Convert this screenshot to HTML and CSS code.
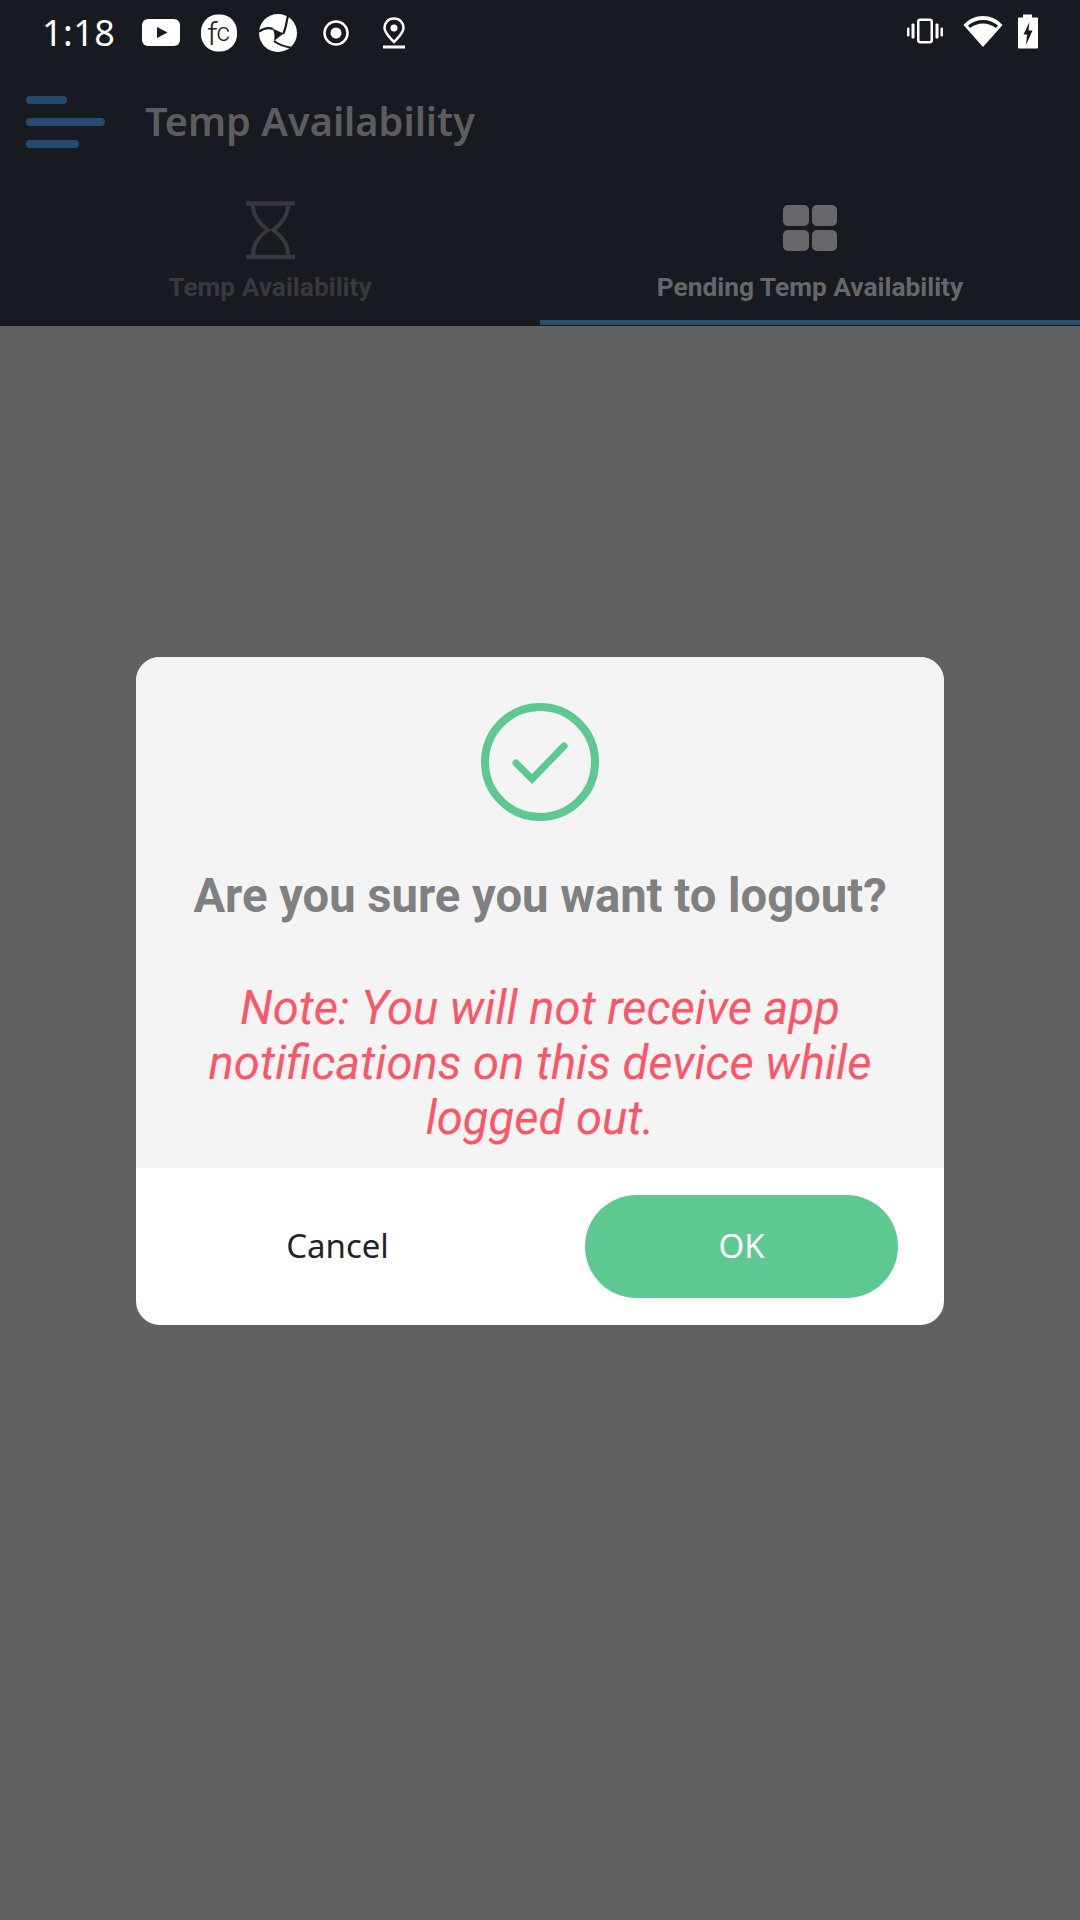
FILE: index.html
```html
<!DOCTYPE html>
<html lang="en">
<head>
    <meta charset="UTF-8">
    <meta name="viewport" content="width=device-width, initial-scale=1.0">
    <title>Temp Availability</title>
    <link rel="stylesheet" href="styles.css">
</head>
<body>
    <div class="status-bar">
        <span class="time">1:18</span>
        <div class="status-left">
            <svg class="status-icon" viewBox="0 0 38 38">
                <rect x="0" y="5" width="38" height="27" rx="6" fill="#fff"/>
                <path d="M15 13 25.500 18.500 15 24Z" fill="#171a21"/>
            </svg>
            <svg class="status-icon" viewBox="0 0 38 38">
                <rect x="1" y="0.500" width="36" height="37" rx="17" fill="#fff"/>
                <text x="7" y="31" class="fc-f">f</text>
                <text x="16.500" y="27" class="fc-c">c</text>
            </svg>
            <svg class="status-icon" viewBox="0 0 38 38">
                <circle cx="19" cy="19" r="19" fill="#fff"/>
                <path d="M13.500 14.500 24.500 19.500 15 27C16 23 15.500 18 13.500 14.500Z" fill="#171a21"/>
                <path d="M24 20C27 15 27 9 29 2M14 15C9 13 5 14 0 17.500M15 27C20 31 27 33 34 34" fill="none" stroke="#171a21" stroke-width="2.200"/>
            </svg>
            <svg class="status-icon" viewBox="0 0 38 38">
                <circle cx="19" cy="19" r="11.500" fill="none" stroke="#fff" stroke-width="2.500"/>
                <circle cx="19" cy="19" r="5.500" fill="#fff"/>
            </svg>
            <svg class="status-icon" viewBox="0 0 38 38">
                <path d="M18 4.500C12 4.500 8.500 9 8.500 14C8.500 19 14 23.500 18 28C22 23.500 27.500 19 27.500 14C27.500 9 24 4.500 18 4.500Z" fill="none" stroke="#fff" stroke-width="2.500"/>
                <circle cx="18" cy="14" r="3.500" fill="#fff"/>
                <rect x="7" y="31.500" width="22" height="3" fill="#fff"/>
            </svg>
        </div>
        <div class="status-right">
            <svg class="vibrate-icon" viewBox="0 0 48 38">
                <rect x="17.250" y="5.750" width="13.500" height="22.500" rx="2" fill="none" stroke="#fff" stroke-width="2.500"/>
                <rect x="10.500" y="9.500" width="3" height="15" rx="1" fill="#fff"/>
                <rect x="34.500" y="9.500" width="3" height="15" rx="1" fill="#fff"/>
                <rect x="6" y="13.500" width="2.500" height="9" rx="1" fill="#fff"/>
                <rect x="39.500" y="13.500" width="2.500" height="9" rx="1" fill="#fff"/>
            </svg>
            <svg class="wifi-icon" viewBox="0 0 40 36">
                <path d="M0.500 10C11 -2 29 -2 39.500 10L20 32Z" fill="#fff"/>
                <path d="M5 10.500C13 3 27 3 35 10.500L33 13C25 7 15 7 7 13Z" fill="#171a21"/>
            </svg>
            <svg class="battery-icon" viewBox="0 0 24 38">
                <path d="M7 0.500H16V3.500H21C21.600 3.500 22 3.900 22 4.500V33.500C22 34.100 21.600 34.500 21 34.500H3C2.400 34.500 2 34.100 2 33.500V4.500C2 3.900 2.400 3.500 3 3.500H7Z" fill="#fff"/>
                <path d="M13.500 8 7.500 20.500H11L10 31 16.500 16.500H12.500Z" fill="#171a21"/>
            </svg>
        </div>
    </div>

    <header class="app-header">
        <div class="menu-icon">
            <span class="menu-bar bar-short"></span>
            <span class="menu-bar bar-long"></span>
            <span class="menu-bar bar-mid"></span>
        </div>
        <h1 class="page-title">Temp Availability</h1>
    </header>

    <nav class="tabs">
        <div class="tab">
            <svg class="hourglass" viewBox="0 0 49 60">
                <path d="M0 3.500H49M0 57H49" stroke="currentColor" stroke-width="4.500" fill="none"/>
                <path d="M7 6C7 17 14 24 22 30C14 36 7 43 7 55M42 6C42 17 35 24 27 30C35 36 42 43 42 55" stroke="currentColor" stroke-width="4" fill="none"/>
            </svg>
            <span class="tab-label">Temp Availability</span>
        </div>
        <div class="tab tab-active">
            <div class="grid-icon">
                <span></span><span></span><span></span><span></span>
            </div>
            <span class="tab-label">Pending Temp Availability</span>
        </div>
    </nav>

    <main class="scrim">
        <div class="dialog">
            <div class="dialog-body">
                <svg class="check-icon" viewBox="0 0 118 118">
                    <circle cx="59" cy="59" r="55" fill="none" stroke="#5dc991" stroke-width="8"/>
                    <path d="M35 60 51 76 83 43" fill="none" stroke="#5dc991" stroke-width="7" stroke-linecap="round"/>
                </svg>
                <h2 class="dialog-title">Are you sure you want to logout?</h2>
                <p class="dialog-note">Note: You will not receive app notifications on this device while logged out.</p>
            </div>
            <div class="dialog-actions">
                <button class="btn btn-cancel">Cancel</button>
                <button class="btn btn-ok">OK</button>
            </div>
        </div>
    </main>
</body>
</html>
```

FILE: styles.css
```css
* {
    box-sizing: border-box;
}
html, body {
    height: 100%;
}
body {
    margin: 0;
    display: flex;
    flex-direction: column;
    font-family: Roboto, Arial, sans-serif;
    background: #616161;
}

/* status bar */
.status-bar {
    height: 65px;
    display: flex;
    align-items: center;
    background: #171a21;
    padding: 0 40px 0 42px;
    color: #fff;
}
.time {
    width: 99.500px;
    font-family: "Noto Sans", sans-serif;
    font-size: 36px;
    letter-spacing: 0.5px;
}
.status-left {
    display: flex;
    gap: 20.500px;
}
.status-icon {
    width: 38px;
    height: 38px;
    overflow: visible;
}
.fc-f {
    font-family: Roboto, sans-serif;
    font-size: 32px;
    font-weight: 300;
    fill: #222;
}
.fc-c {
    font-family: Roboto, sans-serif;
    font-size: 26px;
    font-weight: 300;
    fill: #222;
}
.status-right {
    margin-left: auto;
    display: flex;
    align-items: center;
    gap: 13.500px;
}
.vibrate-icon {
    width: 48px;
    height: 38px;
}
.wifi-icon {
    width: 40px;
    height: 36px;
}
.battery-icon {
    width: 24px;
    height: 38px;
}

/* app header */
.app-header {
    height: 113px;
    display: flex;
    align-items: center;
    background: #171a21;
    padding-left: 26px;
}
.menu-icon {
    width: 119px;
    display: flex;
    flex-direction: column;
    gap: 14px;
}
.menu-bar {
    height: 8px;
    border-radius: 4px;
    background: #264a70;
}
.bar-short {
    width: 41px;
}
.bar-long {
    width: 79px;
}
.bar-mid {
    width: 53px;
}
.page-title {
    margin: 0 0 2px;
    font-family: "Noto Sans", sans-serif;
    font-size: 39.700px;
    font-weight: 600;
    color: #5d5d5f;
}

/* tabs */
.tabs {
    height: 148px;
    display: flex;
    background: #171a21;
    border-bottom: 1px solid #14171d;
}
.tab {
    flex: 1;
    display: flex;
    flex-direction: column;
    align-items: center;
    color: #39393d;
}
.tab-active {
    color: #666769;
    border-bottom: 5px solid #2c4d6f;
}
.hourglass {
    width: 49px;
    height: 60px;
    margin-top: 22px;
}
.grid-icon {
    width: 54px;
    height: 46px;
    margin: 27px 0 9px;
    display: grid;
    grid-template-columns: 1fr 1fr;
    gap: 4px 3px;
}
.grid-icon span {
    background: currentColor;
    border-radius: 5px;
}
.tab-label {
    margin-top: 12px;
    font-size: 26.300px;
    font-weight: 700;
    line-height: 30px;
}

/* logout dialog */
.scrim {
    flex: 1;
    display: flex;
    justify-content: center;
    align-items: flex-start;
    padding-top: 331px;
}
.dialog {
    width: 808px;
    border-radius: 24px;
    overflow: hidden;
    background: #fff;
}
.dialog-body {
    height: 511px;
    display: flex;
    flex-direction: column;
    align-items: center;
    background: #f4f4f4;
    padding: 46px 30px 0;
}
.check-icon {
    width: 118px;
    height: 118px;
}
.dialog-title {
    margin: 48px 0 0;
    font-size: 47.200px;
    font-weight: 700;
    line-height: 55px;
    color: #808080;
    text-align: center;
}
.dialog-note {
    margin: 57px 0 0;
    font-size: 47.200px;
    font-style: italic;
    line-height: 55px;
    color: #fb5667;
    text-align: center;
}
.dialog-actions {
    height: 157px;
    display: flex;
    align-items: center;
    padding: 0 46px 0 30px;
}
.btn {
    border: none;
    background: none;
    height: 103px;
    font-family: "Noto Sans", sans-serif;
    font-size: 33px;
    padding: 0 0 2px;
}
.btn-cancel {
    flex: 1;
    color: #222;
    margin-right: 76px;
}
.btn-ok {
    width: 313px;
    border-radius: 52px;
    background: #5dc991;
    color: #fff;
}
```
